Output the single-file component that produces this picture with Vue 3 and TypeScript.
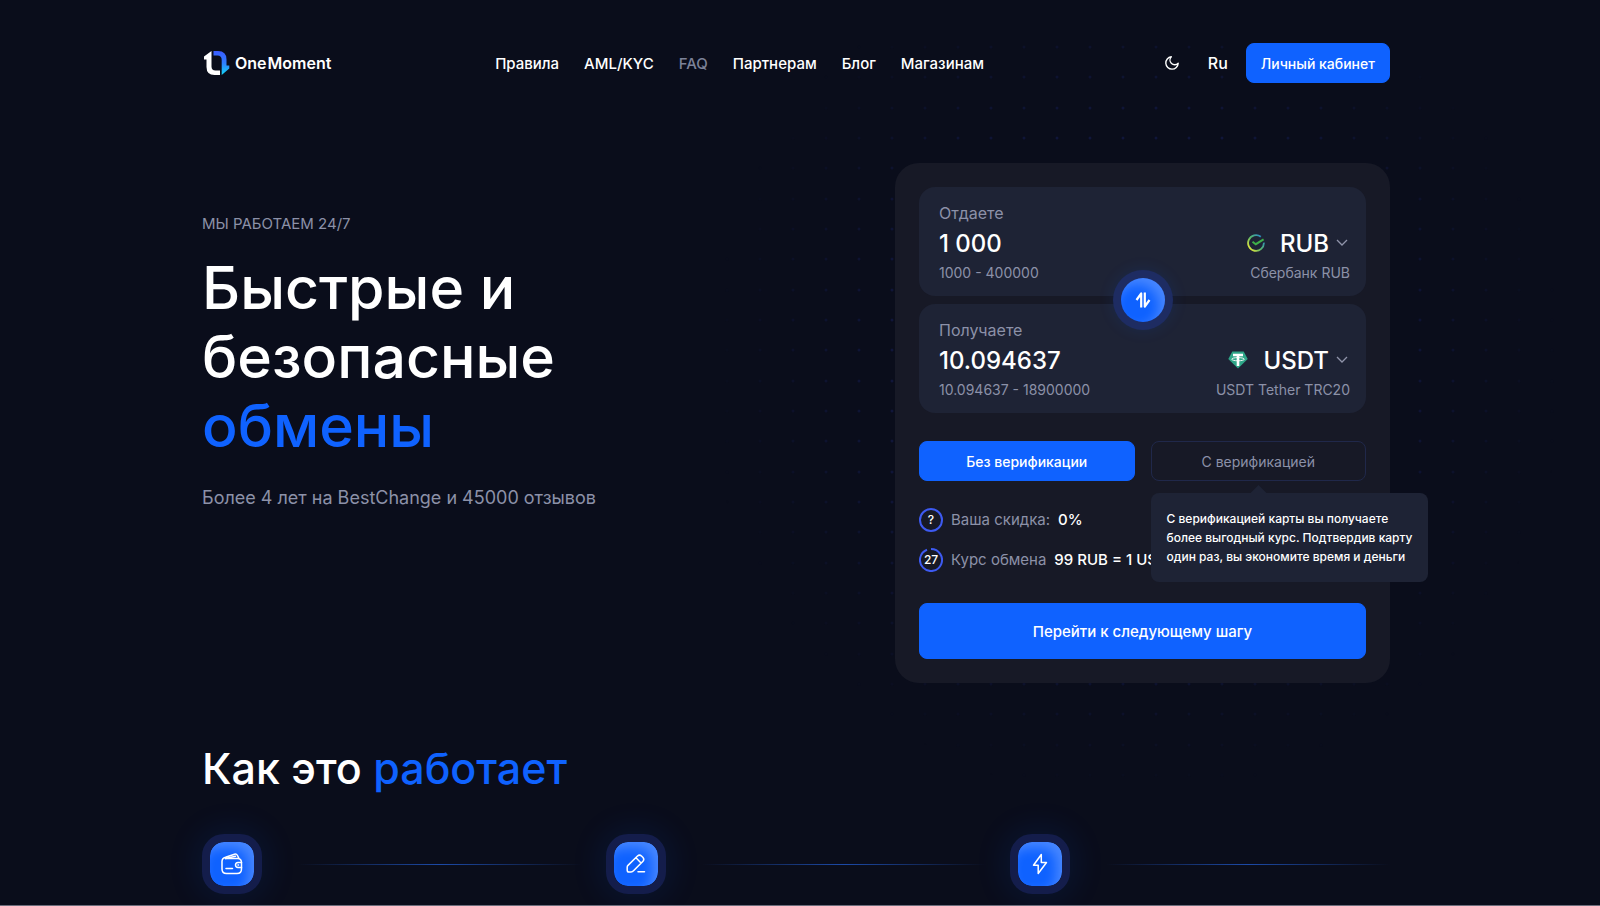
<script setup lang="ts">
import { ref } from 'vue'

interface NavItem {
  label: string
  muted?: boolean
}

const nav: NavItem[] = [
  { label: 'Правила' },
  { label: 'AML/KYC' },
  { label: 'FAQ', muted: true },
  { label: 'Партнерам' },
  { label: 'Блог' },
  { label: 'Магазинам' },
]

const giveAmount = ref<string>('1 000')
const getAmount = ref<string>('10.094637')
const giveCurrency = ref<string>('RUB')
const getCurrency = ref<string>('USDT')
const verified = ref<boolean>(false)

const dots: { x: number; y: number }[] = []
for (let row = 0; row < 25; row++) {
  for (let col = 0; col < 26; col++) {
    dots.push({ x: 20 + col * 33, y: 17 + Math.round((row * 91) / 3) })
  }
}

const steps: string[] = ['wallet', 'edit', 'bolt']
</script>

<template>
  <div class="page">
    <svg class="dots" width="860" height="770" viewBox="0 0 860 770" aria-hidden="true">
      <circle v-for="(d, i) in dots" :key="i" :cx="d.x" :cy="d.y" r="1.5" />
    </svg>

    <div class="container">
      <header class="header">
        <a href="#" class="logo">
          <svg width="28" height="26" viewBox="0 0 28 26" aria-hidden="true">
            <defs>
              <linearGradient id="logoBlue" x1="0" y1="0" x2="0" y2="1">
                <stop offset="0" stop-color="#3a5bff" />
                <stop offset="0.5" stop-color="#2f7dff" />
                <stop offset="1" stop-color="#12d8f5" />
              </linearGradient>
            </defs>
            <path d="M9.500 1v15.500q0 4 4 4H18V25h-5.500Q4.500 25 4.500 17V9.500H2V6.500Z" fill="#fff" />
            <path d="M11.500 1H16q8.500 0 8.500 8.500V15.500H27.300V18.500L19.700 25V10q0-4.500-4.200-4.500h-4Z" fill="url(#logoBlue)" />
          </svg>
          <span class="logo-text"><span>One</span><span>Moment</span></span>
        </a>

        <nav class="nav">
          <a v-for="item in nav" :key="item.label" href="#" :class="{ muted: item.muted }">{{ item.label }}</a>
        </nav>

        <div class="tools">
          <button type="button" class="icon-btn" aria-label="Тема">
            <svg width="16" height="16" viewBox="0 0 16 16" fill="none" stroke="#fff" stroke-width="1.400" stroke-linejoin="round">
              <path d="M7.300 1.800A4.600 4.600 0 0 0 14.200 8.300 6.200 6.200 0 1 1 7.300 1.800Z" />
            </svg>
          </button>
          <button type="button" class="lang">Ru</button>
          <button type="button" class="btn cabinet">Личный кабинет</button>
        </div>
      </header>

      <main>
        <section class="hero">
          <div class="intro">
            <p class="eyebrow">МЫ РАБОТАЕМ 24/7</p>
            <h1>Быстрые и<br />безопасные<br /><span class="accent">обмены</span></h1>
            <p class="lead">Более 4 лет на BestChange и 45000 отзывов</p>
          </div>

          <form class="card" @submit.prevent>
            <div class="fields">
              <div class="field">
                <label class="caption" for="give">Отдаете</label>
                <div class="line">
                  <input id="give" v-model="giveAmount" class="amount" type="text" />
                  <div class="currency">
                    <svg class="coin" width="18" height="18" viewBox="0 0 18 18" fill="none" aria-hidden="true">
                      <defs>
                        <linearGradient id="sber" x1="0.100" y1="0.900" x2="0.900" y2="0.200">
                          <stop offset="0" stop-color="#e6e83c" />
                          <stop offset="0.500" stop-color="#58b86a" />
                          <stop offset="1" stop-color="#2d8fc0" />
                        </linearGradient>
                      </defs>
                      <path d="M13.800 2.700A7.900 7.900 0 1 0 16.900 8.600" stroke="url(#sber)" stroke-width="1.800" />
                      <path d="M5.500 7.700l3.300 2.500 7.800-4.900" stroke="#3fae49" stroke-width="2" />
                    </svg>
                    <select v-model="giveCurrency" aria-label="Валюта отправки">
                      <option>RUB</option>
                    </select>
                    <svg class="chevron" width="12" height="8" viewBox="0 0 12 8" fill="none" stroke="#9094aa" stroke-width="1.300" aria-hidden="true">
                      <path d="M1 1l5 5 5-5" />
                    </svg>
                  </div>
                </div>
                <div class="line note"><span>1000 - 400000</span><span>Сбербанк RUB</span></div>
              </div>

              <div class="field">
                <label class="caption" for="get">Получаете</label>
                <div class="line">
                  <input id="get" v-model="getAmount" class="amount" type="text" />
                  <div class="currency">
                    <svg class="coin" width="20" height="18" viewBox="0 0 20 18" aria-hidden="true">
                      <path d="M4.300 0.500h11.400L19.700 8 10 17.500 0.300 8Z" fill="#2fa688" />
                      <path d="M5 2.800h10v2.500h-3.700V15H8.700V5.300H5Z" fill="#fff" />
                      <ellipse cx="10" cy="8.200" rx="6.300" ry="1.600" fill="none" stroke="#fff" stroke-width="0.900" />
                    </svg>
                    <select v-model="getCurrency" aria-label="Валюта получения">
                      <option>USDT</option>
                    </select>
                    <svg class="chevron" width="12" height="8" viewBox="0 0 12 8" fill="none" stroke="#9094aa" stroke-width="1.300" aria-hidden="true">
                      <path d="M1 1l5 5 5-5" />
                    </svg>
                  </div>
                </div>
                <div class="line note"><span>10.094637 - 18900000</span><span>USDT Tether TRC20</span></div>
              </div>

              <button type="button" class="swap" aria-label="Поменять местами">
                <svg width="16" height="18" viewBox="0 0 16 18" fill="none" stroke="#fff" stroke-width="2.200" stroke-linejoin="round" aria-hidden="true">
                  <path d="M1.500 9L6.200 2.500V16.500" />
                  <path d="M14.500 9L9.800 15.500V1.500" />
                </svg>
              </button>
            </div>

            <div class="modes">
              <button type="button" class="btn" :class="{ outline: verified }" @click="verified = false">Без верификации</button>
              <div class="mode">
                <button type="button" class="btn" :class="{ outline: !verified }" aria-describedby="tip" @click="verified = true">С верификацией</button>
                <div id="tip" class="tip" role="tooltip">
                  С верификацией карты вы получаете<br />более выгодный курс. Подтвердив карту<br />один раз, вы экономите время и деньги
                </div>
              </div>
            </div>

            <div class="facts">
              <div class="fact">
                <span class="ring">
                  <svg width="24" height="24" viewBox="0 0 24 24" fill="none" aria-hidden="true">
                    <circle cx="12" cy="12" r="11" stroke="#3d5af1" stroke-width="2" />
                  </svg>
                  <span>?</span>
                </span>
                <span class="fact-name">Ваша скидка:</span>
                <span>0%</span>
              </div>
              <div class="fact">
                <span class="ring">
                  <svg width="24" height="24" viewBox="0 0 24 24" fill="none" aria-hidden="true">
                    <path d="M12 1A11 11 0 1 1 8 1.750" stroke="#3d5af1" stroke-width="2" />
                  </svg>
                  <span>27</span>
                </span>
                <span class="fact-name">Курс обмена</span>
                <span>99 RUB = 1 USDT</span>
              </div>
            </div>

            <button type="submit" class="btn submit">Перейти к следующему шагу</button>
          </form>
        </section>

        <section class="how">
          <h2>Как это <span class="accent">работает</span></h2>
          <div class="steps">
            <div v-for="step in steps" :key="step" class="step">
              <span class="badge">
                <svg v-if="step === 'wallet'" width="24" height="24" viewBox="0 0 24 24" fill="none" stroke="#fff" stroke-width="1.500" stroke-linecap="round" stroke-linejoin="round" aria-hidden="true">
                  <path d="M5.500 6.500H18q3.500 0.500 3.500 4v6.500q0 4.500-4.500 4.500H6.500Q2 21.500 2 17V9.500Q2 6 5.500 5.200L14.500 2.200q2-0.500 3 1.300l1.500 3" />
                  <path d="M5.500 6.500l10-2.200M6 16.500h6.500M21.500 10.500H18q-2.500 0.200-2.500 2.500t2.500 2.500h3.500M18 13h0.500" />
                </svg>
                <svg v-else-if="step === 'edit'" width="24" height="24" viewBox="0 0 24 24" fill="none" stroke="#fff" stroke-width="1.500" stroke-linecap="round" stroke-linejoin="round" aria-hidden="true">
                  <path d="M3.200 18.200v-3q0-1 0.800-1.800L13.500 4q2-1.800 4 0l1.500 1.500q1.600 1.800 0 3.700L9.500 18.800q-1 1.100-2.500 1.200H5q-1.800 0-1.800-1.800ZM12 5.800l5 5.200M14 19.700h6.500" />
                </svg>
                <svg v-else width="24" height="24" viewBox="0 0 24 24" fill="none" stroke="#fff" stroke-width="1.500" stroke-linejoin="round" aria-hidden="true">
                  <path d="M13.300 2.500L5.500 13.200h4.700v8.300L18.500 10.500h-5.200Z" />
                </svg>
              </span>
              <span class="rule"></span>
            </div>
          </div>
        </section>
      </main>
    </div>
  </div>
</template>

<style>
body {
  background: #0a0d1b;
}
</style>

<style scoped>
* {
  box-sizing: border-box;
}

.page {
  position: relative;
  height: 100vh;
  overflow: hidden;
  padding-right: 8px;
  border-bottom: 1px solid #6b6c7b;
  background: #0a0d1b;
  color: #fff;
  font-family: Inter, 'Liberation Sans', sans-serif;
  font-size: 15px;
  font-weight: 500;
}

.dots {
  position: absolute;
  top: 30px;
  left: calc(50% - 93px);
  fill: #10163a;
  mask-image: radial-gradient(circle at 428px 340px, #000 250px, transparent 430px);
}

.container {
  position: relative;
  max-width: 1236px;
  margin: 0 auto;
  padding: 0 24px;
}

button,
input,
select {
  margin: 0;
  padding: 0;
  border: 0;
  background: none;
  color: inherit;
  font: inherit;
}

button {
  cursor: pointer;
}

a {
  color: inherit;
  text-decoration: none;
}

h1,
h2,
p {
  margin: 0;
}

.accent {
  color: #0f62ff;
}

.header {
  display: flex;
  align-items: center;
  justify-content: space-between;
  padding-top: 43px;
}

.logo {
  display: flex;
  align-items: center;
  gap: 5px;
}

.logo-text {
  display: flex;
  gap: 1px;
  font-size: 16px;
  font-weight: 600;
}

.nav {
  display: flex;
  gap: 25px;
  margin-right: 16px;
}

.muted {
  color: #7c8299;
}

.tools {
  display: flex;
  align-items: center;
}

.icon-btn {
  display: flex;
}

.lang {
  margin: 0 18px 0 28px;
  font-size: 16px;
}

.btn {
  height: 40px;
  border: 1px solid #0f62ff;
  border-radius: 8px;
  background: #0f62ff;
  color: #fff;
  font-size: 14px;
  font-weight: 500;
}

.cabinet {
  padding: 0 14px;
}

.hero {
  display: flex;
  justify-content: space-between;
  margin-top: 80px;
}

.intro {
  padding-top: 51px;
}

.eyebrow {
  color: #8c91a8;
  font-weight: 400;
  line-height: 20px;
}

h1 {
  margin-top: 19px;
  font-size: 59px;
  font-weight: 500;
  line-height: 69px;
}

.lead {
  margin-top: 26px;
  color: #8c91a8;
  font-size: 18px;
  font-weight: 400;
  line-height: 24px;
}

.card {
  width: 495px;
  padding: 24px;
  border-radius: 24px;
  background: #171926;
}

.fields {
  position: relative;
  display: grid;
  grid-template-columns: minmax(0, 1fr);
  gap: 8px;
}

.field {
  display: flex;
  flex-direction: column;
  gap: 6px;
  padding: 16px 16px 13px 20px;
  border-radius: 16px;
  background: #1e2335;
}

.caption {
  color: #8c91a8;
  font-size: 16px;
  font-weight: 400;
  line-height: 20px;
}

.line {
  display: flex;
  align-items: center;
  justify-content: space-between;
}

.amount {
  flex: 1;
  min-width: 0;
  height: 28px;
  outline: none;
  font-size: 24px;
}

.currency {
  display: flex;
  align-items: center;
  padding-right: 2px;
}

.coin {
  margin-right: 15px;
}

select {
  height: 28px;
  appearance: none;
  field-sizing: content;
  font-size: 24px;
}

.chevron {
  margin-left: 7px;
}

.note {
  color: #8c91a8;
  font-size: 14px;
  font-weight: 400;
  line-height: 20px;
}

.swap {
  position: absolute;
  top: 50%;
  left: 50%;
  display: grid;
  place-items: center;
  width: 44px;
  height: 44px;
  border-radius: 50%;
  background: #0f62ff;
  box-shadow: 0 0 0 8px #1e2c62, 0 0 16px 8px rgba(15, 98, 255, 0.12), inset -6px 6px 12px rgba(255, 255, 255, 0.24);
  transform: translate(-50%, -50%);
}

.modes {
  display: grid;
  grid-template-columns: 1fr 1fr;
  gap: 16px;
  margin-top: 28px;
}

.mode {
  position: relative;
  display: grid;
}

.outline {
  border-color: #20284a;
  background: transparent;
  color: #8c91a8;
  font-weight: 400;
}

.tip {
  position: absolute;
  top: 52px;
  left: 0;
  z-index: 2;
  padding: 16px;
  border-radius: 8px;
  background: #1e2335;
  font-size: 12px;
  line-height: 19px;
  white-space: nowrap;
}

.tip::before {
  position: absolute;
  top: -8px;
  left: 100px;
  width: 16px;
  height: 8px;
  background: #1e2335;
  clip-path: polygon(50% 0, 100% 100%, 0 100%);
  content: '';
}

.facts {
  display: grid;
  gap: 16px;
  margin-top: 27px;
}

.fact {
  display: flex;
  align-items: center;
  gap: 8px;
  line-height: 24px;
}

.fact-name {
  color: #8c91a8;
  font-weight: 400;
}

.ring {
  display: grid;
  place-items: center;
  font-size: 12px;
}

.ring > * {
  grid-area: 1 / 1;
}

.submit {
  width: 100%;
  height: 56px;
  margin-top: 31px;
  font-size: 15px;
}

.how {
  margin-top: 58px;
}

h2 {
  font-size: 43px;
  font-weight: 500;
  line-height: 54px;
}

.steps {
  display: grid;
  grid-template-columns: repeat(3, 1fr);
  gap: 24px;
  margin-top: 39px;
}

.step {
  display: flex;
  align-items: center;
  gap: 36px;
}

.badge {
  display: grid;
  place-items: center;
  width: 60px;
  height: 60px;
  border: 8px solid #141d4b;
  border-radius: 22px;
  background: #0f62ff;
  background-clip: padding-box;
  box-shadow: 0 0 36px rgba(15, 98, 255, 0.14), inset -6px 6px 12px rgba(255, 255, 255, 0.24);
}

.rule {
  flex: 1;
  height: 1px;
  background: linear-gradient(90deg, transparent, #1c4aa8 50%, transparent);
}
</style>
